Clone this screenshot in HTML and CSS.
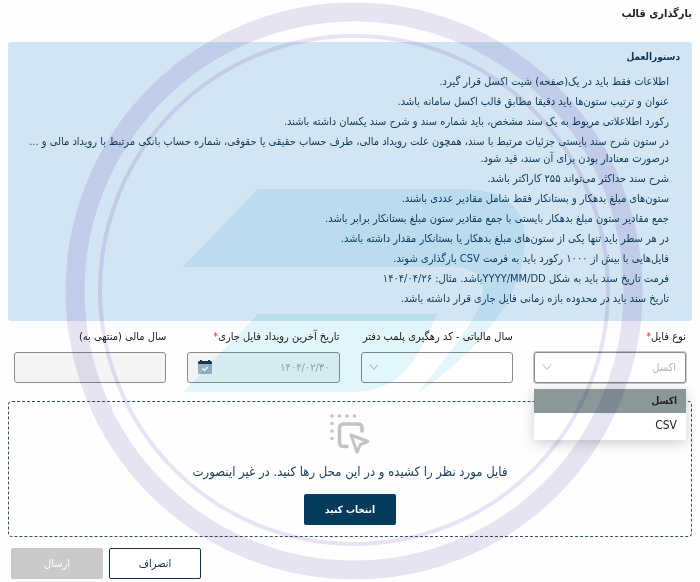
FILE: index.html
```html
<!DOCTYPE html>
<html lang="fa" dir="rtl">
<head>
  <meta charset="UTF-8" />
  <meta name="viewport" content="width=device-width, initial-scale=1" />
  <title>بارگذاری قالب</title>
  <link rel="stylesheet" href="styles.css">
</head>
<body>
  <main class="page">
    <h1 class="page-title">بارگذاری قالب</h1>

    <section class="guide">
      <h2 class="guide-title">دستورالعمل</h2>
      <ul class="guide-list">
        <li>اطلاعات فقط باید در یک(صفحه) شیت اکسل قرار گیرد.</li>
        <li>عنوان و ترتیب ستون‌ها باید دقیقا مطابق قالب اکسل سامانه باشد.</li>
        <li>رکورد اطلاعلاتی مربوط به یک سند مشخص، باید شماره سند و شرح سند یکسان داشته باشند.</li>
        <li>در ستون شرح سند بایستی جزئیات مرتبط با سند، همچون علت رویداد مالی، طرف حساب حقیقی یا حقوقی، شماره حساب بانکی مرتبط با رویداد مالی و ... درصورت معنادار بودن برای آن سند، قید شود.</li>
        <li>شرح سند حداکثر می‌تواند ۲۵۵ کاراکتر باشد.</li>
        <li>ستون‌های مبلغ بدهکار و بستانکار فقط شامل مقادیر عددی باشند.</li>
        <li>جمع مقادیر ستون مبلغ بدهکار بایستی با جمع مقادیر ستون مبلغ بستانکار برابر باشد.</li>
        <li>در هر سطر باید تنها یکی از ستون‌های مبلغ بدهکار یا بستانکار مقدار داشته باشد.</li>
        <li>فایل‌هایی با بیش از ۱۰۰۰ رکورد باید به فرمت CSV بارگذاری شوند.</li>
        <li>فرمت تاریخ سند باید به شکل YYYY/MM/DDباشد. مثال: ۱۴۰۴/۰۴/۲۶</li>
        <li>تاریخ سند باید در محدوده بازه زمانی فایل جاری قرار داشته باشد.</li>
      </ul>
    </section>

    <form class="upload-form">
      <div class="fields">
        <div class="field">
          <label for="fileType">نوع فایل<span class="required">*</span></label>
          <div class="control">
            <select id="fileType" class="input input-active">
              <option>اکسل</option>
              <option>CSV</option>
            </select>
            <svg class="chevron" viewBox="0 0 10 8"><path d="M1 1.5 5 6.5 9 1.5"/></svg>
            <ul class="menu" role="listbox">
              <li class="menu-item selected" role="option" aria-selected="true">اکسل</li>
              <li class="menu-item" role="option" aria-selected="false">CSV</li>
            </ul>
          </div>
        </div>

        <div class="field">
          <label for="taxYear">سال مالیاتی - کد رهگیری پلمب دفتر</label>
          <div class="control">
            <select id="taxYear" class="input">
              <option></option>
            </select>
            <svg class="chevron" viewBox="0 0 10 8"><path d="M1 1.5 5 6.5 9 1.5"/></svg>
          </div>
        </div>

        <div class="field">
          <label for="lastEvent">تاریخ آخرین رویداد فایل جاری<span class="required">*</span></label>
          <div class="control">
            <input id="lastEvent" class="input" type="text" value="۱۴۰۴/۰۲/۳۰" disabled>
            <svg class="calendar" viewBox="0 0 14 14">
              <rect x="0" y="1" width="14" height="13" rx="1.5" fill="#9ab3bf"/>
              <path d="M0 4V2.5Q0 1 1.5 1H2V0H4V1H10V0H12V1H12.5Q14 1 14 2.5V4Z" fill="#0b3a57"/>
              <path d="M4.5 8.5 6.5 10.5 10 7" fill="none" stroke="#fff" stroke-width="1.3"/>
            </svg>
          </div>
        </div>

        <div class="field">
          <label for="fiscalYear">سال مالی (منتهی به)</label>
          <div class="control">
            <input id="fiscalYear" class="input" type="text" disabled>
          </div>
        </div>
      </div>

      <div class="dropzone">
        <svg class="drop-icon" viewBox="0 0 40 40">
          <g fill="#c3c3c3">
            <circle cx="2" cy="2" r="1.8"/><circle cx="9.5" cy="2" r="1.8"/><circle cx="17" cy="2" r="1.8"/><circle cx="24.5" cy="2" r="1.8"/>
            <circle cx="2" cy="9.5" r="1.8"/><circle cx="2" cy="17" r="1.8"/><circle cx="2" cy="24.5" r="1.8"/>
          </g>
          <g fill="none" stroke="#c3c3c3" stroke-width="3.6" stroke-linecap="round" stroke-linejoin="round">
            <path d="M17 32.5H13.5Q9.5 32.5 9.5 28.5V14Q9.5 10 13.5 10H28Q32 10 32 14V17"/>
            <path d="M21 21 38 27.5 30.5 30.5 27 38Z" stroke-width="3"/>
          </g>
        </svg>
        <p class="drop-text">فایل مورد نظر را کشیده و در این محل رها کنید. در غیر اینصورت</p>
        <button type="button" class="btn btn-primary">انتخاب کنید</button>
      </div>

      <div class="actions">
        <button type="button" class="btn btn-outline">انصراف</button>
        <button type="submit" class="btn btn-disabled" disabled>ارسال</button>
      </div>
    </form>

    <svg class="watermark" viewBox="0 0 578 578" aria-hidden="true">
      <g fill="none" stroke="#e8e4f4">
        <circle cx="289" cy="289" r="279" stroke-width="19"/>
        <circle cx="289" cy="288" r="254" stroke-width="4"/>
      </g>
      <g fill="#e2f6fb">
        <path d="M118 265 193 187H395C440 187 460 205 460 237C460 300 405 355 353 391C385 350 418 312 418 288C418 272 408 265 385 265Z"/>
        <path d="M118 390 193 312H372C355 352 340 388 290 390Z"/>
      </g>
    </svg>
  </main>
</body>
</html>
```
FILE: styles.css
```css
* {
  box-sizing: border-box;
}

body {
  margin: 0;
  background: #fefefe;
  color: #222;
  font-family: 'DejaVu Sans Condensed', 'DejaVu Sans', sans-serif;
  font-size: 11px;
}

.page {
  position: relative;
  padding: 4px 8px 0;
}

.page-title {
  margin: 0 0 18px;
  font-size: 11px;
  line-height: 20px;
}

/* Instructions */
.guide {
  padding: 6px 12px 14px;
  background: #d3e4f3;
  color: #0b3a5b;
  border-radius: 3px;
}

.guide-title {
  margin: 0 0 8px;
  font-size: 10px;
  line-height: 17px;
}

.guide-list {
  display: flex;
  flex-direction: column;
  gap: 3px;
  margin: 0;
  padding: 0 11px 0 0;
  list-style: none;
  line-height: 17px;
}

/* Form fields */
.fields {
  display: grid;
  grid-template-columns: repeat(4, 1fr);
  gap: 21px;
  padding: 7px 6px 18px;
}

.field label {
  display: block;
  margin-bottom: 7px;
  line-height: 17px;
  white-space: nowrap;
}

.required {
  color: #d9363e;
}

.control {
  position: relative;
}

.input {
  display: block;
  width: 100%;
  height: 31px;
  padding: 0 9px;
  appearance: none;
  background: #fff;
  border: 1px solid #8a8d90;
  border-radius: 3px;
  color: #b5b5b5;
  font-family: inherit;
  font-size: 11px;
  opacity: 1;
}

.input:disabled {
  background: #f4f4f5;
  color: #a2a6aa;
}

.input-active {
  box-shadow: 0 0 0 1px #c4c7ca;
}

.chevron {
  position: absolute;
  left: 8px;
  top: 11px;
  width: 10px;
  height: 8px;
  fill: none;
  stroke: #b5b5b5;
  pointer-events: none;
}

.calendar {
  position: absolute;
  left: 11px;
  top: 8px;
  width: 14px;
  height: 14px;
}

.menu {
  position: absolute;
  top: 37px;
  left: 0;
  right: 0;
  z-index: 1;
  margin: 0;
  padding: 0 0 3px;
  background: #fff;
  list-style: none;
  box-shadow: 0 3px 12px rgba(0, 0, 0, 0.2);
}

.menu-item {
  padding: 0 9px;
  font-size: 12px;
  line-height: 24px;
}

.menu-item.selected {
  background: #8b989a;
  font-size: 10px;
  font-weight: bold;
}

/* Drop area */
.dropzone {
  display: flex;
  flex-direction: column;
  align-items: center;
  padding: 12px 12px 11px;
  border: 1px dashed #33505f;
  border-radius: 4px;
}

.drop-icon {
  width: 40px;
  height: 40px;
}

.drop-text {
  margin: 8px 0 12px;
  color: #163f58;
  font-size: 13px;
  line-height: 20px;
}

.btn {
  width: 92px;
  height: 31px;
  border: 1px solid transparent;
  border-radius: 2px;
  font-family: inherit;
  font-size: 11px;
}

.btn-primary {
  background: #043a5a;
  color: #fff;
  font-size: 10px;
  font-weight: bold;
}

.btn-outline {
  background: #fff;
  border-color: #0b3247;
  color: #0b3247;
}

.btn-disabled {
  background: #cbc9ca;
  color: #fff;
}

.actions {
  display: flex;
  justify-content: flex-end;
  gap: 6px;
  padding: 11px 3px 2px;
}

/* Logo watermark over the whole page */
.watermark {
  position: absolute;
  top: 2px;
  left: calc(50% - 285px);
  z-index: 2;
  width: 578px;
  height: 578px;
  mix-blend-mode: multiply;
  pointer-events: none;
}
```
